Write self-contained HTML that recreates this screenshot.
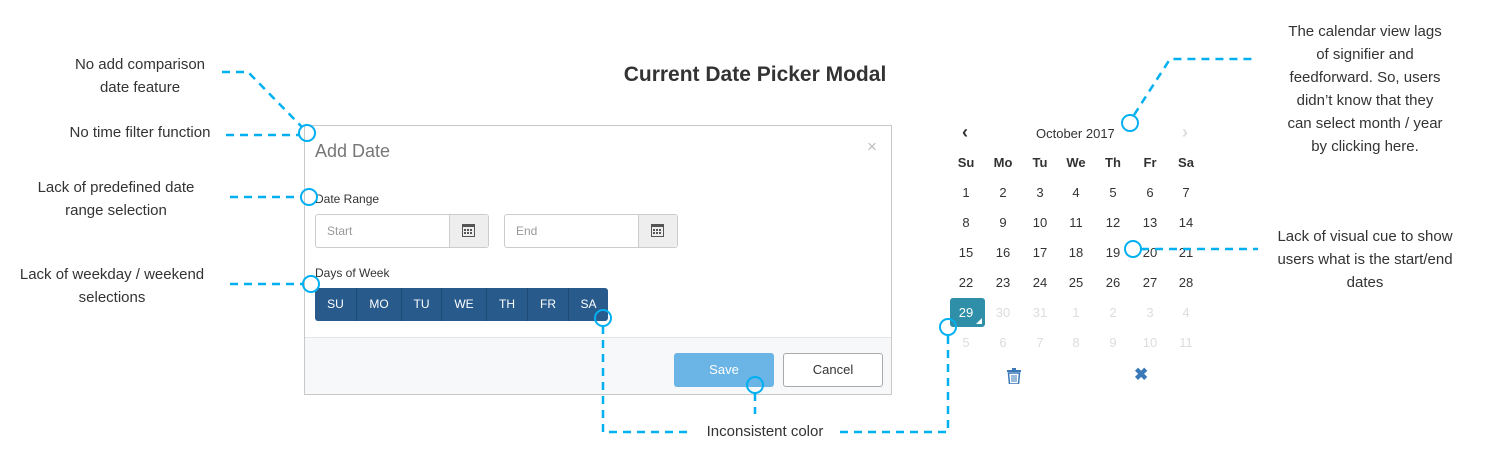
<!DOCTYPE html>
<html><head><meta charset="utf-8"><style>
body{margin:0;width:1510px;height:457px;background:#fff;position:relative;overflow:hidden;font-family:"Liberation Sans",sans-serif;color:#333}
.a{position:absolute;font-size:15px;line-height:23px;text-align:center;color:#333;white-space:nowrap}
.abs{position:absolute}
.cal{position:absolute;font-size:13px;text-align:center;width:30px;margin-left:-15px}
</style></head><body>
<div class="abs" style="left:0;width:1510px;top:63px;text-align:center;font-size:21px;font-weight:bold;color:#333">Current Date Picker Modal</div>

<div class="a" style="left:40px;width:200px;top:53px">No add comparison<br>date feature</div>
<div class="a" style="left:40px;width:200px;top:121px">No time filter function</div>
<div class="a" style="left:16px;width:200px;top:176px">Lack of predefined date<br>range selection</div>
<div class="a" style="left:12px;width:200px;top:263px">Lack of weekday / weekend<br>selections</div>
<div class="a" style="left:690px;width:150px;top:420px">Inconsistent color</div>
<div class="a" style="left:1265px;width:200px;top:20px">The calendar view lags<br>of signifier and<br>feedforward. So, users<br>didn’t know that they<br>can select month / year<br>by clicking here.</div>
<div class="a" style="left:1265px;width:200px;top:225px">Lack of visual cue to show<br>users what is the start/end<br>dates</div>

<!-- modal -->
<div class="abs" style="left:304px;top:125px;width:586px;height:268px;border:1px solid #c8c8c8;background:#fff"></div>
<div class="abs" style="left:305px;top:337px;width:586px;height:56px;background:#f7f8fa;border-top:1px solid #e2e4e8"></div>
<div class="abs" style="left:315px;top:141px;font-size:18px;color:#777">Add Date</div>
<div class="abs" style="left:867px;top:137px;font-size:17px;color:#bbb">×</div>
<div class="abs" style="left:315px;top:192px;font-size:12px;color:#333">Date Range</div>
<div class="abs" style="left:315px;top:214px;width:172px;height:32px;border:1px solid #ccc;border-radius:3px;background:#fff"></div>
<div class="abs" style="left:449px;top:215px;width:38px;height:32px;border-left:1px solid #ccc;background:#eee;border-radius:0 3px 3px 0"></div>
<div class="abs" style="left:327px;top:224px;font-size:12px;color:#999">Start</div>
<div class="abs" style="left:504px;top:214px;width:172px;height:32px;border:1px solid #ccc;border-radius:3px;background:#fff"></div>
<div class="abs" style="left:638px;top:215px;width:38px;height:32px;border-left:1px solid #ccc;background:#eee;border-radius:0 3px 3px 0"></div>
<div class="abs" style="left:516px;top:224px;font-size:12px;color:#999">End</div>
<svg class="abs" style="left:462px;top:224px" width="13" height="13"><rect x="0.5" y="0.5" width="12" height="12" fill="none" stroke="#555"/><rect x="0" y="0" width="13" height="3" fill="#555"/><g fill="#555"><rect x="2" y="5" width="2" height="2"/><rect x="5" y="5" width="2" height="2"/><rect x="8" y="5" width="2" height="2"/><rect x="2" y="8" width="2" height="2"/><rect x="5" y="8" width="2" height="2"/><rect x="8" y="8" width="2" height="2"/></g></svg>
<svg class="abs" style="left:651px;top:224px" width="13" height="13"><rect x="0.5" y="0.5" width="12" height="12" fill="none" stroke="#555"/><rect x="0" y="0" width="13" height="3" fill="#555"/><g fill="#555"><rect x="2" y="5" width="2" height="2"/><rect x="5" y="5" width="2" height="2"/><rect x="8" y="5" width="2" height="2"/><rect x="2" y="8" width="2" height="2"/><rect x="5" y="8" width="2" height="2"/><rect x="8" y="8" width="2" height="2"/></g></svg>
<div class="abs" style="left:315px;top:266px;font-size:12px;color:#333">Days of Week</div>
<div class="abs" style="left:315px;top:288px;width:293px;height:33px;background:#285b8c;border-radius:3px;display:flex;color:#fff;font-size:12px;overflow:hidden">
<div style="width:41px;line-height:33px;text-align:center;border-right:1px solid #1d4a75">SU</div>
<div style="width:44px;line-height:33px;text-align:center;border-right:1px solid #1d4a75">MO</div>
<div style="width:39px;line-height:33px;text-align:center;border-right:1px solid #1d4a75">TU</div>
<div style="width:44px;line-height:33px;text-align:center;border-right:1px solid #1d4a75">WE</div>
<div style="width:40px;line-height:33px;text-align:center;border-right:1px solid #1d4a75">TH</div>
<div style="width:40px;line-height:33px;text-align:center;border-right:1px solid #1d4a75">FR</div>
<div style="flex:1;line-height:33px;text-align:center">SA</div></div>
<div class="abs" style="left:674px;top:353px;width:100px;height:34px;background:#6ab4e6;border-radius:3px;color:#fff;font-size:13px;line-height:34px;text-align:center">Save</div>
<div class="abs" style="left:783px;top:353px;width:98px;height:32px;border:1px solid #aaa;border-radius:3px;background:#fff;color:#333;font-size:13px;line-height:32px;text-align:center">Cancel</div>

<!-- calendar -->
<div class="abs" style="left:950px;top:298px;width:35px;height:29px;background:#2f8fa8;border-radius:3px"></div>
<svg class="abs" style="left:976px;top:318px" width="6" height="6"><path d="M6 0V6H0Z" fill="#fff"/></svg>
<div class="abs" style="left:962px;top:122px;font-size:18px;font-weight:bold;color:#333">‹</div>
<div class="abs" style="left:1182px;top:122px;font-size:18px;font-weight:bold;color:#ddd">›</div>
<div class="abs" style="left:1036px;top:126px;font-size:13px;color:#333">October 2017</div>
<div id="cal"></div>
<script>
var xs=[966,1003,1040,1076,1113,1150,1186],ys=[163,193,223,253,283,313,343];
var h=['Su','Mo','Tu','We','Th','Fr','Sa'],s='';
for(var i=0;i<7;i++)s+='<div class="cal" style="left:'+xs[i]+'px;top:'+(ys[0]-8)+'px;font-weight:bold">'+h[i]+'</div>';
for(var r=0;r<6;r++)for(var c=0;c<7;c++){var n=r*7+c+1,col='#333',t=n;if(n>28){col='#ddd';t=n<=31?n:n-31;}if(n==29)col='#fff';
s+='<div class="cal" style="left:'+xs[c]+'px;top:'+(ys[r+1]-8)+'px;color:'+col+'">'+t+'</div>';}
document.getElementById('cal').innerHTML=s;
</script>
<svg class="abs" style="left:1007px;top:368px" width="14" height="16"><rect x="0" y="2" width="14" height="2" fill="#3a78b8"/><rect x="5" y="0" width="4" height="2" fill="#3a78b8"/><path d="M1.5 5h11l-1 11h-9z" fill="none" stroke="#3a78b8" stroke-width="1.5"/><path d="M5 7v7M7 7v7M9 7v7" stroke="#3a78b8"/></svg>
<div class="abs" style="left:1134px;top:365px;font-size:17px;font-weight:bold;color:#3a78b8">✖</div>

<svg class="abs" style="left:0;top:0" width="1510" height="457" fill="none" stroke="#00b0f0" stroke-width="2.5">
<g stroke-dasharray="8,6">
<path d="M222 72H248L302 127"/>
<path d="M226 135H299"/>
<path d="M230 197H301"/>
<path d="M230 284H303"/>
<path d="M603 326V432H688"/>
<path d="M840 432H948V335"/>
<path d="M755 393V414"/>
<path d="M1134 115L1170 59H1252"/>
<path d="M1141 249H1258"/>
</g>
<circle cx="307" cy="133" r="8" stroke-width="2"/>
<circle cx="309" cy="197" r="8" stroke-width="2"/>
<circle cx="311" cy="284" r="8" stroke-width="2"/>
<circle cx="603" cy="318" r="8" stroke-width="2"/>
<circle cx="755" cy="385" r="8" stroke-width="2"/>
<circle cx="948" cy="327" r="8" stroke-width="2"/>
<circle cx="1130" cy="123" r="8" stroke-width="2"/>
<circle cx="1133" cy="249" r="8" stroke-width="2"/>
</svg>
</body></html>
